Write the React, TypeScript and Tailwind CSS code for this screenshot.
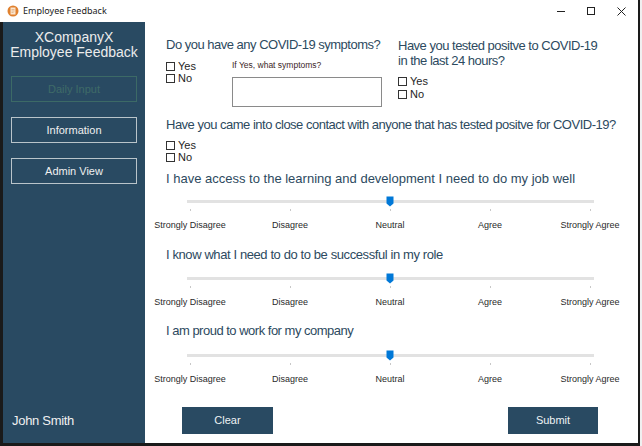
import React from 'react'

const labels = ['Strongly Disagree', 'Disagree', 'Neutral', 'Agree', 'Strongly Agree']

function Check({ label }: { label: string }) {
  return (
    <div className="flex items-center h-[12px] gap-[3px]">
      <span className="w-[9px] h-[9px] border border-[#333] bg-white" />
      <span className="text-[11px] leading-[12px] text-[#1e1e1e]">{label}</span>
    </div>
  )
}

function Slider() {
  return (
    <div className="relative h-[36px] w-[493px]">
      {/* track */}
      <div className="absolute left-[42px] top-[4px] w-[407px] h-[3px] bg-[#e2e2e2]" />
      {/* thumb */}
      <svg className="absolute left-[241px] top-0" width="8" height="11" viewBox="0 0 8 11">
        <path d="M0.5 0.5 H7.5 V7.5 L4 10.5 L0.5 7.5 Z" fill="#0078d7" />
      </svg>
      {/* ticks + labels */}
      <div className="absolute left-[-5px] top-[13px] flex">
        {labels.map(l => (
          <div key={l} className="w-[100px] flex flex-col items-center">
            <span className="w-px h-[2px] bg-[#c8c8c8]" />
            <span className="mt-[8px] text-[9px] leading-[12px] text-[#2a2a2a] whitespace-nowrap">{l}</span>
          </div>
        ))}
      </div>
    </div>
  )
}

export default function App() {
  return (
    <div
      className="w-[642px] h-[446px] bg-[#f0f0f0] flex flex-col overflow-hidden"
      style={{ fontFamily: '"Liberation Sans", Arial, sans-serif' }}
    >
      {/* Title bar */}
      <div className="h-[22px] shrink-0 bg-white flex items-center border-r-2 border-[#1a1a1a] mr-[2px]">
        <svg className="ml-[7px]" width="12" height="12" viewBox="0 0 12 12">
          <circle cx="6" cy="6" r="5.5" fill="#e0812f" />
          <rect x="3.5" y="2.5" width="5" height="7" fill="#fbe6cf" />
          <path d="M4.5 4.5 H7.5 M4.5 6 H7.5 M4.5 7.5 H6.5" stroke="#d9a06a" strokeWidth="0.6" />
        </svg>
        <span className="ml-[4px] text-[9px] text-[#1a1a1a]" style={{ fontFamily: '"Noto Sans", "Liberation Sans", sans-serif' }}>
          Employee Feedback
        </span>
        <div className="ml-auto flex items-center h-full">
          <div className="w-[30px] flex justify-center">
            <span className="w-[8px] h-px bg-[#222]" />
          </div>
          <div className="w-[30px] flex justify-center">
            <span className="w-[8px] h-[8px] border border-[#222]" />
          </div>
          <div className="w-[30px] flex justify-center mr-[2px]">
            <svg width="9" height="9" viewBox="0 0 9 9">
              <path d="M0.5 0.5 L8.5 8.5 M8.5 0.5 L0.5 8.5" stroke="#222" strokeWidth="1" />
            </svg>
          </div>
        </div>
      </div>

      {/* Body */}
      <div className="flex-1 min-h-0 flex border-l-[3px] border-r-2 border-b-[3px] border-[#1a1a1a] mr-[2px]">
        {/* Sidebar */}
        <div className="w-[142px] shrink-0 bg-[#294a62] flex flex-col">
          <div className="pt-[8px] text-center text-[14px] leading-[15px] text-[#ececec] whitespace-nowrap">
            <div>XCompanyX</div>
            <div>Employee Feedback</div>
          </div>
          <div className="mt-[16px] ml-[8px] w-[126px] flex flex-col gap-[15px]">
            <div className="h-[26px] border border-[#3c6a66] flex items-center justify-center text-[11px] text-[#3f6a68]">
              Daily Input
            </div>
            <div className="h-[26px] border border-[#b9c4ca] flex items-center justify-center text-[11px] text-[#f0f0f0]">
              Information
            </div>
            <div className="h-[26px] border border-[#b9c4ca] flex items-center justify-center text-[11px] text-[#f0f0f0]">
              Admin View
            </div>
          </div>
          <div className="mt-auto mb-[13px] ml-[9px] text-[13px] tracking-[-0.3px] text-[#f0f0f0]">John Smith</div>
        </div>

        {/* Main */}
        <div className="flex-1 min-w-0 bg-white flex flex-col">
          <div className="flex pt-[15px]">
            {/* Q1 */}
            <div className="pl-[21px] w-[253px] shrink-0">
              <div className="text-[13px] leading-[16px] tracking-[-0.5px] text-[#2d4a60] whitespace-nowrap">Do you have any COVID-19 symptoms?</div>
              <div className="flex mt-[7px]">
                <div className="w-[66px] flex flex-col">
                  <Check label="Yes" />
                  <Check label="No" />
                </div>
                <div className="flex flex-col">
                  <span className="text-[8.5px] leading-[11px] text-[#3b2626]">If Yes, what symptoms?</span>
                  <div className="mt-[6px] w-[150px] h-[30px] border border-[#8a8a8a]" />
                </div>
              </div>
            </div>
            {/* Q2 */}
            <div>
              <div className="text-[13px] leading-[15px] tracking-[-0.5px] text-[#2d4a60] pt-[1px] whitespace-nowrap">
                <div>Have you tested positve to COVID-19</div>
                <div>in the last 24 hours?</div>
              </div>
              <div className="mt-[7px] flex flex-col gap-[1px]">
                <Check label="Yes" />
                <Check label="No" />
              </div>
            </div>
          </div>

          {/* Q3 */}
          <div className="pl-[21px] mt-[10px]">
            <div className="text-[13px] leading-[16px] tracking-[-0.5px] text-[#2d4a60] whitespace-nowrap">
              Have you came into close contact with anyone that has tested positve for COVID-19?
            </div>
            <div className="mt-[6px] flex flex-col">
              <Check label="Yes" />
              <Check label="No" />
            </div>
          </div>

          {/* Q4 */}
          <div className="pl-[21px] mt-[8px] text-[13px] leading-[16px] text-[#2d4a60] whitespace-nowrap">
            I have access to the learning and development I need to do my job well
          </div>
          <div className="mt-[9px]"><Slider /></div>

          {/* Q5 */}
          <div className="pl-[21px] mt-[15px] text-[13px] leading-[16px] tracking-[-0.4px] text-[#2d4a60]">
            I know what I need to do to be successful in my role
          </div>
          <div className="mt-[10px]"><Slider /></div>

          {/* Q6 */}
          <div className="pl-[21px] mt-[14px] text-[13px] leading-[16px] tracking-[-0.5px] text-[#2d4a60]">
            I am proud to work for my company
          </div>
          <div className="mt-[11px]"><Slider /></div>

          {/* Buttons */}
          <div className="mt-[21px] flex">
            <div className="ml-[37px] w-[91px] h-[27px] bg-[#294a62] flex items-center justify-center text-[11px] text-[#eef2f4]">
              Clear
            </div>
            <div className="ml-[235px] w-[90px] h-[27px] bg-[#294a62] flex items-center justify-center text-[11px] text-[#eef2f4]">
              Submit
            </div>
          </div>
        </div>
      </div>
    </div>
  )
}
